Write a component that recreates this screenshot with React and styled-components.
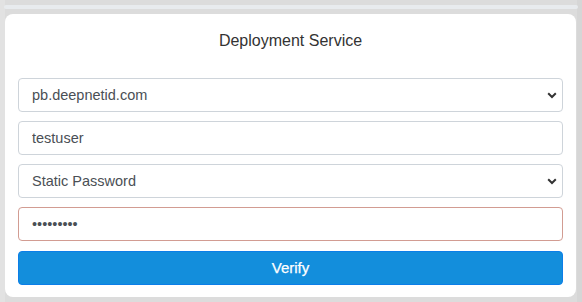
import React from "react"
import styled, { createGlobalStyle } from "styled-components"

const GlobalStyle = createGlobalStyle`
  html, body {
    margin: 0;
    background: #dcdcdc;
    font-family: "Liberation Sans", Arial, sans-serif;
  }
`

const Page = styled.div`
  width: 582px;
  height: 302px;
  padding-top: 5px;
  box-sizing: border-box;
  overflow: hidden;
  background:
    linear-gradient(90deg, #e2e2e2 0 5px, transparent 5px 577px, #d6d6d6 577px),
    #dcdcdc;
`

const TopStrip = styled.div`
  height: 4px;
  margin: 0 4px;
  border-radius: 3px;
  background: #e8ebee;
`

const Card = styled.div`
  margin: 5px 6px 0 5px;
  padding: 18px 13px 12px;
  background: #fff;
  border-radius: 8px;
`

const Title = styled.div`
  text-align: center;
  font-size: 16px;
  line-height: 18px;
  color: #333;
  margin-bottom: 28px;
`

const Form = styled.form`
  display: flex;
  flex-direction: column;
  gap: 9px;
  margin: 0;
`

const fieldBase = `
  display: block;
  width: 100%;
  height: 34px;
  box-sizing: border-box;
  padding: 0 13px;
  border-radius: 4px;
  background: #fff;
  font-family: "Liberation Sans", Arial, sans-serif;
  font-size: 14.5px;
  color: #4a4f55;
  outline: none;
  margin: 0;
`

const Input = styled.input`
  ${fieldBase}
  border: 1px solid ${(p) => (p.$invalid ? "#d29c92" : "#ced4da")};
`

const SelectWrap = styled.div`
  position: relative;
`

const Select = styled.select`
  ${fieldBase}
  border: 1px solid #ced4da;
  appearance: none;
  -webkit-appearance: none;
`

const Chevron = styled.svg`
  position: absolute;
  right: 6px;
  top: 50%;
  width: 10px;
  height: 7px;
  margin-top: -3px;
  pointer-events: none;
`

const Button = styled.button`
  margin-top: 1px;
  height: 34px;
  width: 100%;
  padding: 0 0 2px;
  border: 1px solid #0c7ee8;
  border-radius: 4px;
  background: #138edc;
  color: #fff;
  font-family: "Liberation Sans", Arial, sans-serif;
  font-size: 15px;
  font-weight: 400;
  -webkit-text-stroke: 0.25px #fff;
  cursor: pointer;
`

function Dropdown({ value, options }) {
  return (
    <SelectWrap>
      <Select defaultValue={value}>
        {options.map((o) => (
          <option key={o}>{o}</option>
        ))}
      </Select>
      <Chevron viewBox="0 0 10 7">
        <path d="M1.2 1.3 L5 5 L8.8 1.3" fill="none" stroke="#333" strokeWidth="2" />
      </Chevron>
    </SelectWrap>
  )
}

export default function App() {
  return (
    <Page>
      <GlobalStyle />
      <TopStrip />
      <Card>
        <Title>Deployment Service</Title>
        <Form onSubmit={(e) => e.preventDefault()}>
          <Dropdown value="pb.deepnetid.com" options={["pb.deepnetid.com"]} />
          <Input type="text" defaultValue="testuser" />
          <Dropdown value="Static Password" options={["Static Password", "OTP"]} />
          <Input type="password" defaultValue="123456789" $invalid />
          <Button type="submit">Verify</Button>
        </Form>
      </Card>
    </Page>
  )
}
